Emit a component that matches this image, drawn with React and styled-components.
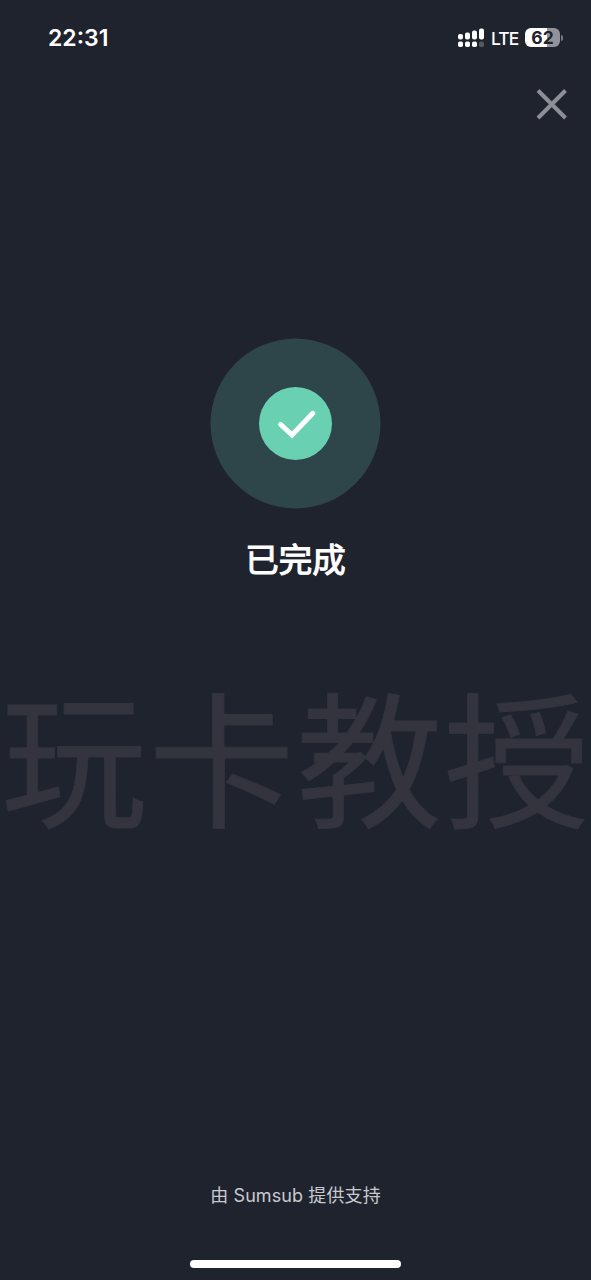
import React from 'react'
import styled, { createGlobalStyle } from 'styled-components'

const GlobalStyle = createGlobalStyle`
  body {
    margin: 0;
    background: #1f232d;
  }
`

const Screen = styled.div`
  position: relative;
  display: flex;
  flex-direction: column;
  height: 1280px;
  overflow: hidden;
  background: #1f232d;
  color: #fff;
  font-family: Inter, 'Noto Sans CJK SC', sans-serif;
`

const StatusBar = styled.header`
  display: flex;
  justify-content: space-between;
  align-items: center;
  box-sizing: border-box;
  height: 76px;
  padding: 0 28px 0 48px;
`

const Time = styled.time`
  font-size: 23px;
  font-weight: 600;
  line-height: 28px;
`

const Indicators = styled.div`
  display: flex;
  align-items: center;
`

const Network = styled.span`
  margin: 2px 0 0 7px;
  width: 34px;
  font-size: 17.5px;
  font-weight: 500;
  line-height: 22px;
  letter-spacing: -0.9px;
`

const Battery = styled.div`
  width: 35px;
  height: 19px;
  margin-bottom: 1px;
  border-radius: 6px;
  background: linear-gradient(to right, #fff 62%, #92939a 62%);
  color: #1f232d;
  font-size: 17.5px;
  font-weight: 700;
  line-height: 20px;
  text-align: center;
`

const BatteryCap = styled.div`
  width: 2px;
  height: 6px;
  margin-left: 1px;
  border-radius: 0 2px 2px 0;
  background: #777981;
`

const TopBar = styled.div`
  display: flex;
  justify-content: flex-end;
  padding: 12px 23px 0 0;
`

const CloseButton = styled.button`
  display: flex;
  padding: 0;
  border: 0;
  background: none;
  color: #8e8f96;
`

const Content = styled.main`
  display: flex;
  flex: 1;
  flex-direction: column;
  align-items: center;
  padding-top: 218px;
`

const Title = styled.h1`
  margin: 27px 0 0;
  font-size: 33.5px;
  font-weight: 400;
  line-height: 48px;
  -webkit-text-stroke: 1.1px #fff;
`

const Footer = styled.footer`
  display: flex;
  flex-direction: column;
  align-items: center;
`

const Powered = styled.p`
  margin: 0 0 50px;
  color: #c9cad0;
  font-size: 18px;
  line-height: 28px;
  letter-spacing: 0.1px;
`

const HomeIndicator = styled.div`
  width: 211px;
  height: 8px;
  margin-bottom: 12px;
  border-radius: 4px;
  background: #fff;
`

const Watermark = styled.div`
  position: absolute;
  top: 643px;
  left: 1px;
  color: #33343e;
  font-family: 'Noto Sans CJK SC', sans-serif;
  font-size: 146px;
  line-height: 220px;
  letter-spacing: 1.6px;
  white-space: nowrap;
  pointer-events: none;
  -webkit-text-stroke: 0.8px #33343e;
`

const SignalIcon = () => (
  <svg width="26" height="20" viewBox="0 0 26 20" fill="#fff">
    <rect x="0" y="6" width="5" height="5.5" rx="2" />
    <rect x="7" y="4.5" width="5" height="7" rx="2" />
    <rect x="14" y="2.5" width="5" height="9" rx="2" />
    <rect x="21" y="0.5" width="5" height="11" rx="2" />
    <rect x="0" y="13.5" width="5" height="5.5" rx="1.8" />
    <rect x="7" y="13.5" width="5" height="5.5" rx="1.8" />
    <rect x="14" y="13.5" width="5" height="5.5" rx="1.8" />
    <rect x="21" y="13.5" width="5" height="5.5" rx="1.8" fill="#555862" />
  </svg>
)

const CloseIcon = () => (
  <svg width="32" height="32" viewBox="0 0 32 32" fill="none" stroke="currentColor" strokeWidth="4">
    <path d="M2 2.5L29.5 30M29.5 2.5L2 30" />
  </svg>
)

const SuccessIcon = () => (
  <svg width="171" height="171" viewBox="0 0 171 171" fill="none">
    <circle cx="85.5" cy="85.5" r="85" fill="#2e4549" />
    <circle cx="85.5" cy="85.5" r="36.5" fill="#69d1b1" />
    <path d="M70.7 86.5L82 97L102.8 75.3" stroke="#fff" strokeWidth="5" strokeLinecap="round" />
  </svg>
)

const App = () => (
  <>
    <GlobalStyle />
    <Screen>
      <StatusBar>
        <Time>22:31</Time>
        <Indicators>
          <SignalIcon />
          <Network>LTE</Network>
          <Battery>62</Battery>
          <BatteryCap />
        </Indicators>
      </StatusBar>
      <TopBar>
        <CloseButton aria-label="关闭">
          <CloseIcon />
        </CloseButton>
      </TopBar>
      <Content>
        <SuccessIcon />
        <Title>已完成</Title>
      </Content>
      <Footer>
        <Powered>由 Sumsub 提供支持</Powered>
        <HomeIndicator />
      </Footer>
      <Watermark aria-hidden="true">玩卡教授</Watermark>
    </Screen>
  </>
)

export default App
